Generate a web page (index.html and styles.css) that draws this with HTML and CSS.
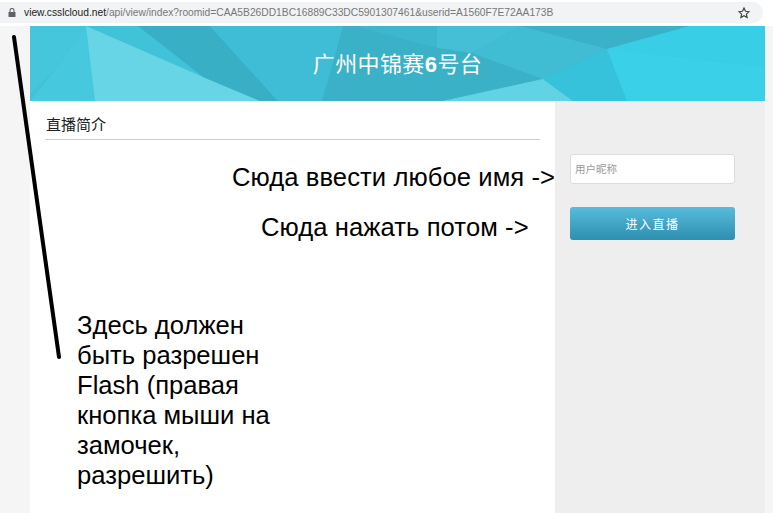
FILE: index.html
```html
<!DOCTYPE html>
<html lang="zh">
<head>
<meta charset="utf-8">
<title>直播</title>
<link rel="stylesheet" href="styles.css">
</head>
<body>
<div class="browser-bar">
  <div class="url-pill">
    <svg class="lock" width="8" height="9" viewBox="0 0 8 9"><path d="M2 4V2.500a2 2 0 0 1 4 0V4" fill="none" stroke="#5f6368" stroke-width="1.100"/><rect x=".5" y="4" width="7" height="5" fill="#5f6368"/></svg>
    <span class="url"><span class="host">view.csslcloud.net</span>/api/view/index?roomid=CAA5B26DD1BC16889C33DC5901307461&amp;userid=A1560F7E72AA173B</span>
    <svg class="star" width="12" height="12" viewBox="0 0 12 12"><path d="M6 1l1.500 3.300 3.500.4-2.600 2.400.7 3.500L6 8.800l-3.100 1.800.7-3.500L1 4.700l3.500-.4z" fill="none" stroke="#444" stroke-width="1.200"/></svg>
  </div>
</div>
<div class="page">
  <header class="banner">
    <svg class="banner-art" viewBox="0 0 735 75" preserveAspectRatio="none">
      <rect width="735" height="75" fill="#40c3d9"/>
      <polygon points="0,0 56,0 30,38 0,68" fill="#45c6dd"/>
      <polygon points="0,75 30,38 56,0 65,75" fill="#46c9df"/>
      <polygon points="56,0 173,51 230,75 65,75" fill="#67d5e6"/>
      <polygon points="108,0 180,0 248,75 230,75 173,51" fill="#38afc5"/>
      <polygon points="180,0 313,0 292,75 248,75" fill="#40bdd6"/>
      <polygon points="313,0 660,0 577,23 513,53 413,75 292,75" fill="#3ab1c6"/>
      <polygon points="325,0 407,0 407,22" fill="#3db7cd"/>
      <polygon points="407,0 490,0 442,27 407,22" fill="#44bfd6"/>
      <polygon points="490,0 577,23 513,53 442,27" fill="#40bdd3"/>
      <polygon points="413,75 513,53 543,75" fill="#62d3e4"/>
      <polygon points="513,53 577,23 597,75 543,75" fill="#35c2da"/>
      <polygon points="577,23 735,41 735,75 597,75" fill="#3ad1e8"/>
      <polygon points="660,0 735,0 735,41 577,23" fill="#38cfe6"/>
    </svg>
    <h1 class="title">广州中锦赛<strong class="num">6</strong>号台</h1>
  </header>
  <div class="columns">
    <main class="intro">
      <h2 class="intro-title">直播简介</h2>
    </main>
    <aside class="login">
      <input class="name-input" type="text" placeholder="用户昵称">
      <button class="enter" type="button">进入直播</button>
    </aside>
  </div>
</div>
<p class="note note-input">Сюда ввести любое имя -&gt;</p>
<p class="note note-button">Сюда нажать потом -&gt;</p>
<p class="note note-flash">Здесь должен<br>быть разрешен<br>Flash (правая<br>кнопка мыши на<br>замочек,<br>разрешить)</p>
<svg class="arrow-line" width="773" height="513" viewBox="0 0 773 513"><path d="M14 37 L59 357" fill="none" stroke="#000" stroke-width="4" stroke-linecap="round"/></svg>
</body>
</html>
```
FILE: styles.css
```css
* { box-sizing: border-box; }
html, body { margin: 0; height: 100%; }
body {
  width: 773px;
  height: 513px;
  overflow: hidden;
  background: #f5f5f5;
  font-family: "Liberation Sans", "Noto Sans CJK SC", sans-serif;
  position: relative;
}
.browser-bar {
  height: 26px;
  background: #fff;
  padding-top: 2px;
  padding-right: 10px;
}
.url-pill {
  height: 21px;
  background: #f1f3f4;
  border-radius: 0 11px 11px 0;
  display: flex;
  align-items: center;
  padding: 0 13px 0 8px;
}
.lock { flex: none; margin-right: 8px; }
.url {
  flex: 1;
  font-size: 10.250px;
  color: #777;
  white-space: nowrap;
  overflow: hidden;
}
.host { color: #222; }
.star { flex: none; }
.page {
  margin-left: 30px;
  width: 735px;
  height: 487px;
  display: flex;
  flex-direction: column;
}
.banner {
  position: relative;
  height: 75px;
  flex: none;
  display: flex;
  align-items: center;
  justify-content: center;
}
.banner-art { position: absolute; inset: 0; width: 100%; height: 100%; }
.title {
  position: relative;
  margin: 0;
  font-size: 22px;
  font-weight: 400;
  color: #fff;
  letter-spacing: .4px;
  padding-bottom: 3px;
}
.num { font-weight: 700; }
.columns { flex: 1; display: flex; }
.intro {
  width: 525px;
  background: #fff;
  padding: 14px 15px 0;
}
.intro-title {
  margin: 0;
  height: 25px;
  padding-left: 1px;
  font-size: 15px;
  font-weight: 400;
  color: #222;
  line-height: 19px;
  border-bottom: 1px solid #ccc;
}
.login {
  width: 210px;
  background: #eee;
  padding: 53px 30px 0 15px;
  display: flex;
  flex-direction: column;
  gap: 23px;
}
.name-input {
  height: 30px;
  width: 165px;
  border: 1px solid #ddd;
  border-radius: 3px;
  background: #fff;
  padding: 0 4px;
  font: 10.500px "Liberation Sans", "Noto Sans CJK SC", sans-serif;
  outline: none;
}
.name-input::placeholder { color: #999; }
.enter {
  height: 33px;
  width: 165px;
  border: 0;
  border-radius: 3px;
  background: linear-gradient(#57bcdc, #2e8fb0);
  color: #fff;
  font: 12px "Liberation Sans", "Noto Sans CJK SC", sans-serif;
  letter-spacing: 1.500px;
}
.note {
  position: absolute;
  margin: 0;
  color: #000;
  font-size: 25.600px;
  line-height: 30px;
  white-space: nowrap;
}
.note-input { left: 232px; top: 162px; letter-spacing: .08px; }
.note-button { left: 261px; top: 212px; letter-spacing: .08px; }
.note-flash { left: 77px; top: 310px; }
.arrow-line { position: absolute; left: 0; top: 0; pointer-events: none; }
```
